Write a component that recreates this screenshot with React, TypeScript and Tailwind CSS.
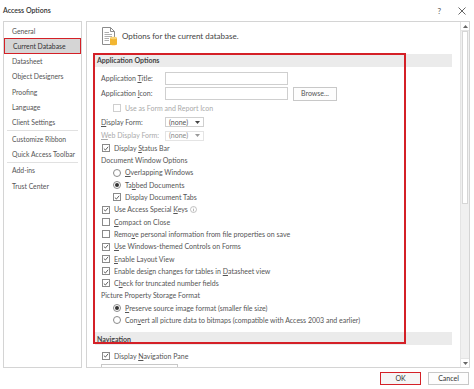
import React from 'react';

const font = { fontFamily: 'Lato, "Open Sans", sans-serif' };

const navItems = [
  { label: 'General' },
  { label: 'Current Database', active: true },
  { label: 'Datasheet' },
  { label: 'Object Designers' },
  { label: 'Proofing' },
  { label: 'Language' },
  { label: 'Client Settings', divider: true },
  { label: 'Customize Ribbon' },
  { label: 'Quick Access Toolbar', divider: true },
  { label: 'Add-ins' },
  { label: 'Trust Center' },
];

// label with an underlined access key
const Acc = ({ pre = '', k, post = '' }: { pre?: string; k: string; post?: string }) => (
  <span className="whitespace-nowrap">
    {pre}
    <span className="underline underline-offset-[1px]">{k}</span>
    {post}
  </span>
);

const Check = ({ checked, disabled }: { checked?: boolean; disabled?: boolean }) => (
  <span
    className={`w-[8px] h-[8px] border flex items-center justify-center bg-white shrink-0 ${
      disabled ? 'border-[#cfcfcf]' : 'border-[#8a8a8a]'
    }`}
  >
    {checked && (
      <svg width="7" height="7" viewBox="0 0 7 7">
        <path d="M1 3.6 L2.8 5.3 L6 1.5" fill="none" stroke="#333" strokeWidth="0.9" />
      </svg>
    )}
  </span>
);

const Radio = ({ checked }: { checked?: boolean }) => (
  <span className="w-[8px] h-[8px] rounded-full border border-[#8a8a8a] flex items-center justify-center bg-white shrink-0">
    {checked && <span className="w-[4px] h-[4px] rounded-full bg-[#333]" />}
  </span>
);

const Row = ({ children, indent }: { children: React.ReactNode; indent?: boolean }) => (
  <div className={`h-[12.3px] shrink-0 flex items-center gap-[4px] whitespace-nowrap ${indent ? 'pl-[26px]' : 'pl-[15px]'}`}>
    {children}
  </div>
);

const Section = ({ title }: { title: string }) => (
  <div className="mx-[8px] h-[13px] shrink-0 bg-[#ebebeb] flex items-center pl-[2px] text-[7px] font-bold text-[#444]">
    {title}
  </div>
);

const Dropdown = ({ disabled }: { disabled?: boolean }) => (
  <div
    className={`w-[39px] h-[10px] border flex items-center justify-between px-[3px] ${
      disabled ? 'border-[#e4e4e4] text-[#888]' : 'border-[#cfcfcf] text-[#555]'
    }`}
  >
    <span>(none)</span>
    <svg width="5" height="3" viewBox="0 0 5 3">
      <path d="M0 0 H5 L2.5 3 Z" fill={disabled ? '#999' : '#444'} />
    </svg>
  </div>
);

const DbIcon = () => (
  <svg width="17" height="19" viewBox="0 0 17 19">
    <path d="M1.5 0.5 H9.5 L13.5 4.5 V17.5 H1.5 Z" fill="#fff" stroke="#8c8c8c" strokeWidth="1" />
    <path d="M9.5 0.5 V4.5 H13.5" fill="none" stroke="#8c8c8c" strokeWidth="1" />
    <path d="M3.5 5.5 H8 M3.5 7.5 H11 M3.5 9.5 H11 M3.5 11.5 H8 M3.5 13.5 H8" stroke="#9a9a9a" strokeWidth="0.8" />
    <path d="M9 11 V17.5 C9 18.5 16 18.5 16 17.5 V11 Z" fill="#f2b632" />
    <ellipse cx="12.5" cy="11" rx="3.5" ry="1.2" fill="#f8d275" />
  </svg>
);

export default function App() {
  return (
    <div className="w-[474px] h-[389px] bg-white relative overflow-hidden text-[#555] text-[7px]" style={font}>
      {/* Title bar */}
      <div className="h-[21px] flex items-center pl-[3px] pr-[8px]">
        <span className="text-[7px] font-semibold text-[#333]">Access Options</span>
        <span className="ml-auto text-[8px] text-[#555] mr-[17px]">?</span>
        <svg width="8" height="8" viewBox="0 0 8 8">
          <path d="M0.5 0.5 L7.5 7.5 M7.5 0.5 L0.5 7.5" stroke="#555" strokeWidth="0.9" />
        </svg>
      </div>

      {/* Body */}
      <div className="h-[347px] flex gap-[4px] pl-[3px] pr-[4px]">
        {/* Left nav */}
        <div className="w-[79px] border border-[#d4d4d4] pt-[1px] text-[6.8px]">
          {navItems.map((item) => (
            <div key={item.label}>
              <div
                className={`h-[15.3px] flex items-center pl-[8px] whitespace-nowrap ${
                  item.active ? 'bg-[#d5d5d5] border-[1.5px] border-[#d42027] text-[#333]' : ''
                }`}
              >
                {item.label}
              </div>
              {item.divider && <div className="h-px bg-[#e1e1e1] mx-[3px]" />}
            </div>
          ))}
        </div>

        {/* Right panel */}
        <div className="flex-1 border border-[#d4d4d4] flex overflow-hidden">
          <div className="flex-1 flex flex-col overflow-hidden">
            <div className="h-[32px] flex items-start pl-[14px] pt-[5px] gap-[4px] shrink-0">
              <DbIcon />
              <span className="text-[8px] text-[#444] mt-[3px]">Options for the current database.</span>
            </div>

            <Section title="Application Options" />

            <div className="h-[4px] shrink-0" />
            <div className="h-[15px] shrink-0 flex items-center pl-[14px]">
              <span className="w-[64px]">
                <Acc pre="Application " k="T" post="itle:" />
              </span>
              <div className="w-[123px] h-[13px] border border-[#cfcfcf]" />
            </div>
            <div className="h-[15px] shrink-0 flex items-center pl-[14px]">
              <span className="w-[64px]">
                <Acc pre="Application " k="I" post="con:" />
              </span>
              <div className="w-[123px] h-[13px] border border-[#cfcfcf]" />
              <div className="ml-[5px] w-[44px] h-[14px] border border-[#c8c8c8] bg-[#fdfdfd] flex items-center justify-center">
                Browse...
              </div>
            </div>
            <div className="h-[14px] shrink-0 flex items-center gap-[4px] pl-[26px] text-[#aaa]">
              <Check disabled />
              <span className="whitespace-nowrap">Use as Form and Report Icon</span>
            </div>
            <div className="h-[14px] shrink-0 flex items-center pl-[14px]">
              <span className="w-[64px]">
                <Acc k="D" post="isplay Form:" />
              </span>
              <Dropdown />
            </div>
            <div className="h-[13px] shrink-0 flex items-center pl-[14px]">
              <span className="w-[64px] text-[#aaa]">
                <Acc k="W" post="eb Display Form:" />
              </span>
              <Dropdown disabled />
            </div>

            <Row>
              <Check checked />
              <Acc pre="Display " k="S" post="tatus Bar" />
            </Row>
            <div className="h-[12.3px] shrink-0 flex items-center pl-[14px]">Document Window Options</div>
            <Row indent>
              <Radio />
              <Acc k="O" post="verlapping Windows" />
            </Row>
            <Row indent>
              <Radio checked />
              <Acc pre="Ta" k="b" post="bed Documents" />
            </Row>
            <Row indent>
              <Check checked />
              <span>Display Document Tabs</span>
            </Row>
            <Row>
              <Check checked />
              <Acc pre="Use Access Special " k="K" post="eys" />
              <svg width="7" height="7" viewBox="0 0 7 7" className="-ml-[2px]">
                <circle cx="3.5" cy="3.5" r="3" fill="none" stroke="#9a9a9a" strokeWidth="0.6" />
                <path d="M3.5 3 V5.3" stroke="#9a9a9a" strokeWidth="0.7" />
                <circle cx="3.5" cy="2" r="0.4" fill="#9a9a9a" />
              </svg>
            </Row>
            <Row>
              <Check />
              <Acc k="C" post="ompact on Close" />
            </Row>
            <Row>
              <Check />
              <Acc pre="Remo" k="v" post="e personal information from file properties on save" />
            </Row>
            <Row>
              <Check checked />
              <Acc k="U" post="se Windows-themed Controls on Forms" />
            </Row>
            <Row>
              <Check checked />
              <Acc k="E" post="nable Layout View" />
            </Row>
            <Row>
              <Check checked />
              <Acc pre="Enable design changes for tables in " k="D" post="atasheet view" />
            </Row>
            <Row>
              <Check checked />
              <Acc pre="C" k="h" post="eck for truncated number fields" />
            </Row>
            <div className="h-[12.3px] shrink-0 flex items-center pl-[14px]">Picture Property Storage Format</div>
            <Row indent>
              <Radio checked />
              <Acc k="P" post="reserve source image format (smaller file size)" />
            </Row>
            <Row indent>
              <Radio />
              <Acc pre="Con" k="v" post="ert all picture data to bitmaps (compatible with Access 2003 and earlier)" />
            </Row>

            <div className="h-[6px] shrink-0" />
            <Section title="Navigation" />
            <div className="h-[4px] shrink-0" />
            <div className="h-[13px] flex items-center gap-[4px] pl-[15px] shrink-0">
              <Check checked />
              <Acc pre="Display " k="N" post="avigation Pane" />
            </div>
            <div className="ml-[14px] mt-[2px] w-[77px] h-[14px] border border-[#c8c8c8] shrink-0" />
          </div>

          {/* Scrollbar */}
          <div className="w-[9px] border-l border-[#e4e4e4] flex flex-col bg-[#f0f0f0]">
            <div className="h-[9px] bg-white flex items-center justify-center border-b border-[#e4e4e4]">
              <svg width="5" height="3" viewBox="0 0 5 3">
                <path d="M0 3 H5 L2.5 0 Z" fill="#666" />
              </svg>
            </div>
            <div className="h-[173px] bg-white border border-[#d6d6d6] mx-[1px]" />
            <div className="flex-1" />
            <div className="h-[9px] bg-white flex items-center justify-center border-t border-[#e4e4e4]">
              <svg width="5" height="3" viewBox="0 0 5 3">
                <path d="M0 0 H5 L2.5 3 Z" fill="#666" />
              </svg>
            </div>
          </div>
        </div>
      </div>

      {/* Buttons */}
      <div className="h-[21px] flex items-center justify-end gap-[7px] pr-[5px]">
        <div className="w-[41px] h-[13px] border-[1.5px] border-[#d42027] bg-[#f5f5f5] flex items-center justify-center text-[#333]">
          OK
        </div>
        <div className="w-[41px] h-[13px] border border-[#c8c8c8] bg-[#fdfdfd] flex items-center justify-center text-[#333]">
          Cancel
        </div>
      </div>

      {/* Annotation box */}
      <div className="absolute left-[93px] top-[53px] w-[313px] h-[291px] border-2 border-[#d42027] pointer-events-none" />
    </div>
  );
}
